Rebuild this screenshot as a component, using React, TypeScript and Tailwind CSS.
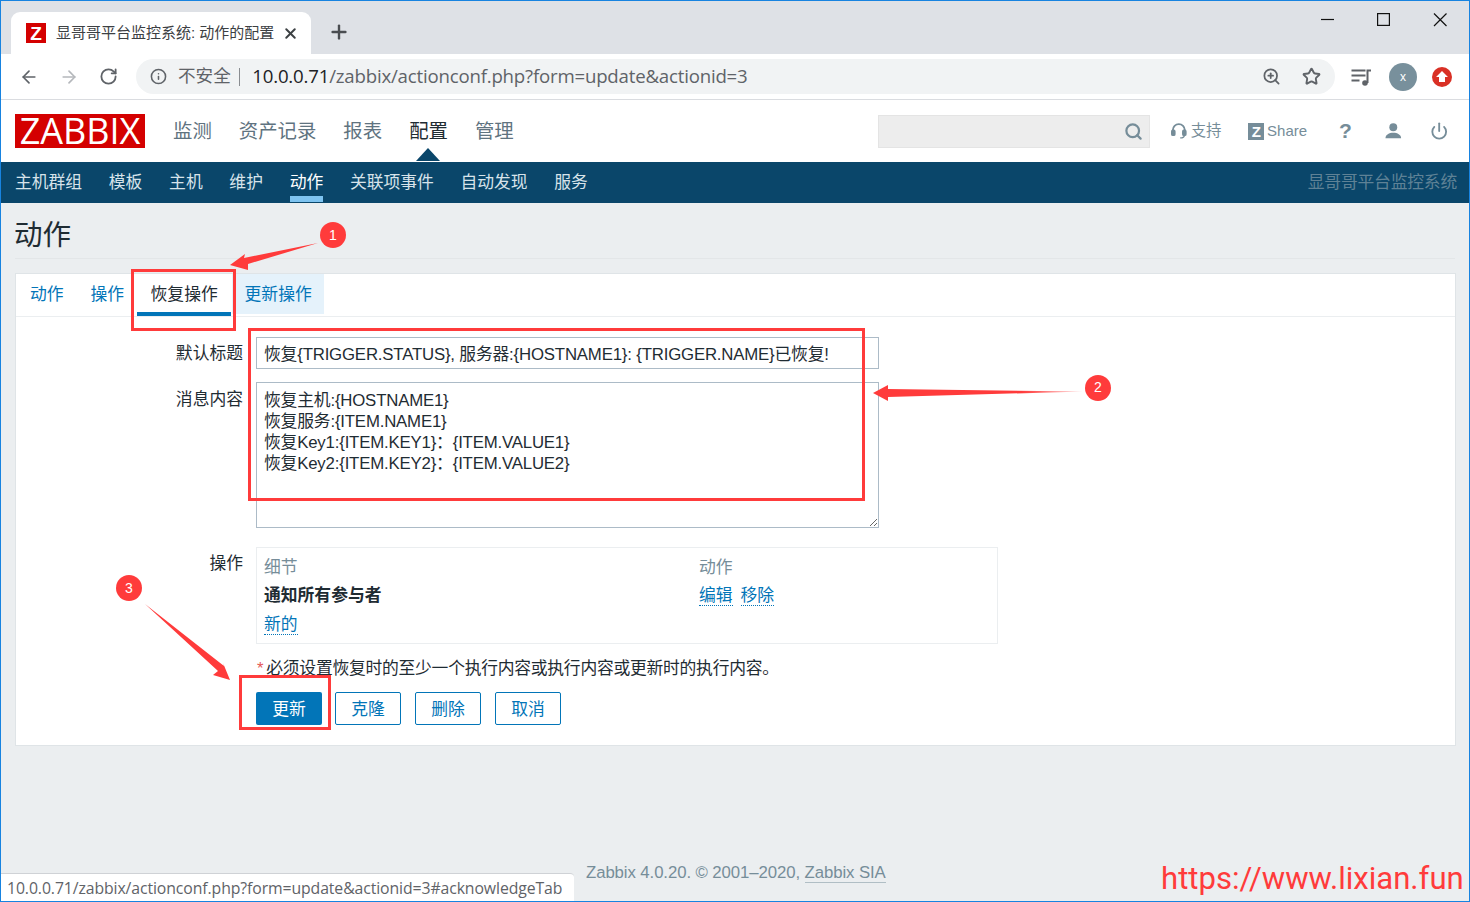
import { ArrowLeft, ArrowRight, RotateCw, Info, ZoomIn, Star, X, Plus, Search, Power } from "lucide-react";

const sans = "font-['Liberation_Sans','Noto_Sans_CJK_SC',sans-serif]";

function Annotations() {
  return (
    <svg className="absolute left-[-1px] top-[-1px] pointer-events-none" width="1470" height="902">
      <defs>
        <linearGradient id="fade2" x1="873" x2="1085" y1="0" y2="0" gradientUnits="userSpaceOnUse">
          <stop offset="0" stopColor="#ff3b3b" />
          <stop offset="0.7" stopColor="#ff3b3b" />
          <stop offset="1" stopColor="#ff3b3b" stopOpacity="0.25" />
        </linearGradient>
      </defs>
      <g fill="none" stroke="#ff3b3b" strokeWidth="3">
        <rect x="132.500" y="270.500" width="102" height="59" />
        <rect x="249.500" y="329.500" width="614" height="170" />
        <rect x="240.500" y="676.500" width="89" height="52" />
      </g>
      <polygon fill="#ff3b3b" points="230,265 245,254 244,258 318,243 248,264 248,270" />
      <polygon fill="url(#fade2)" points="873,393 888,385 888,389 1083,391.500 888,397 888,401" />
      <polygon fill="#ff3b3b" points="230,680 213,675 218,671 145,604 224,666 223,663" />
      <circle cx="333" cy="235" r="13" fill="#ff3b3b" />
      <circle cx="1098" cy="388" r="13" fill="#ff3b3b" />
      <circle cx="129" cy="588" r="13" fill="#ff3b3b" />
    </svg>
  );
}

function Badge({ n, cls }: { n: string; cls: string }) {
  return (
    <span className={`absolute w-[26px] h-[26px] flex items-center justify-center text-white text-[14px] font-['Liberation_Sans',sans-serif] ${cls}`}>
      {n}
    </span>
  );
}

function Browser() {
  return (
    <>
      <div className="h-[53px] bg-[#dee1e6] flex items-end pl-[10px] shrink-0">
        <div className={`w-[300px] h-[42px] bg-white rounded-t-[9px] flex items-center pl-[15px] pr-[15px] ${sans}`}>
          <span className="w-5 h-5 bg-[#d40000] text-white font-bold text-[19px] flex items-center justify-center leading-none mr-[10px] shrink-0">Z</span>
          <span className="text-[15px] text-[#3c4043] whitespace-nowrap flex-1 overflow-hidden">显哥哥平台监控系统: 动作的配置</span>
          <X size={17} strokeWidth={2.800} className="text-[#3c4043] shrink-0 mr-[-3px]" />
        </div>
        <Plus size={22} strokeWidth={2.600} className="text-[#4a4d51] ml-[17px] mb-[11px]" />
        <div className="ml-auto self-start flex items-center h-[36px]">
          <svg width="160" height="36" viewBox="0 0 160 36" className="mr-[18px]">
            <g fill="none" stroke="#111" strokeWidth="1.200">
              <path d="M30 18.500h13" />
              <rect x="86.600" y="12.600" width="11.800" height="11.800" />
              <path d="M143 12.500l12.500 12.500M155.500 12.500l-12.500 12.500" />
            </g>
          </svg>
        </div>
      </div>
      <div className="h-[46px] bg-white border-b border-[#dadce0] flex items-center shrink-0">
        <div className="flex items-center w-[135px] pl-[18px] gap-[20px]">
          <ArrowLeft size={20} strokeWidth={2} className="text-[#5f6368]" />
          <ArrowRight size={20} strokeWidth={2} className="text-[#b5b8bc]" />
          <RotateCw size={19} strokeWidth={2.300} className="text-[#5f6368]" />
        </div>
        <div className="w-[1199px] h-[35px] bg-[#f1f3f4] rounded-full flex items-center pl-[14px] pr-[14px]">
          <Info size={17} strokeWidth={2.200} className="text-[#5f6368] shrink-0" />
          <span className={`ml-[11px] text-[17.600px] text-[#5f6368] ${sans}`}>不安全</span>
          <span className="ml-[8px] w-[1.500px] h-[18px] bg-[#8a8d91]" />
          <span className="ml-[12px] mb-[2px] text-[18.650px] text-[#5f6368] font-['Open_Sans',sans-serif] tracking-[-0.2px] whitespace-nowrap">
            <span className="text-[#202124]">10.0.0.71</span>/zabbix/actionconf.php?form=update&amp;actionid=3
          </span>
          <ZoomIn size={19} strokeWidth={2.200} className="text-[#5f6368] ml-auto" />
          <Star size={19} strokeWidth={2.400} className="text-[#5f6368] ml-[21px]" />
        </div>
        <svg className="ml-[16px]" width="21" height="18" viewBox="0 0 21 18" fill="none" stroke="#5f6368" strokeWidth="2">
          <path d="M0.500 2.500h14M0.500 7.500h14M0.500 12.500h8" />
          <path d="M16.500 15V2.500h3.500" />
          <circle cx="14" cy="15" r="2.800" fill="#5f6368" stroke="none" />
        </svg>
        <span className={`ml-[17px] w-[28px] h-[28px] rounded-full bg-[#78909c] text-white text-[12px] flex items-center justify-center ${sans}`}>x</span>
        <span className="ml-[15px] w-[20px] h-[20px] rounded-full bg-[#d93025] flex items-center justify-center">
          <svg width="12" height="11" viewBox="0 0 12 11" fill="#fff"><path d="M6 0l6 6H9v5H3V6H0z" /></svg>
        </span>
      </div>
    </>
  );
}

function ZabbixHeader() {
  const top = [
    { t: "监测" },
    { t: "资产记录" },
    { t: "报表" },
    { t: "配置", on: true },
    { t: "管理" },
  ];
  const sub = ["主机群组", "模板", "主机", "维护", "动作", "关联项事件", "自动发现", "服务"];
  return (
    <div className={sans}>
      <div className="h-[62px] bg-white flex items-center pl-[14px] pr-[21px] relative">
        <div className="w-[130px] h-[34px] bg-[#d40000] text-white text-[36px] leading-[34px] text-center font-['Open_Sans',sans-serif]">ZABBIX</div>
        <div className="flex gap-[27px] ml-[28px] text-[19.400px] leading-[30px]">
          {top.map((x) => (
            <a key={x.t} className={x.on ? "text-[#1f2c33] relative" : "text-[#5f7380]"}>
              {x.t}
              {x.on && <span className="absolute left-[7px] top-[32px] w-0 h-0 border-x-[12px] border-x-transparent border-b-[13px] border-b-[#0a466a]" />}
            </a>
          ))}
        </div>
        <div className="ml-auto w-[272px] h-[33px] bg-[#ededed] border border-[#e4e4e4] flex items-center justify-end pr-[6px]">
          <Search size={19} strokeWidth={2.800} className="text-[#768d99]" />
        </div>
        <div className="flex items-center text-[#768d99] ml-[21px] w-[277px] whitespace-nowrap">
          <svg width="17" height="18" viewBox="0 0 17 18" fill="none" stroke="#768d99" strokeWidth="2">
            <path d="M2 11V8a6.500 6.500 0 0113 0v3" />
            <rect x="1" y="8.500" width="3" height="5" fill="#768d99" rx="1" />
            <rect x="13" y="8.500" width="3" height="5" fill="#768d99" rx="1" />
            <path d="M14.500 13.500c0 2-2 3-4.500 3" strokeWidth="1.500" />
          </svg>
          <span className="ml-[4px] text-[15.400px]">支持</span>
          <span className="ml-[27px] w-[17px] h-[17px] bg-[#768d99] text-white text-[15px] font-bold flex items-center justify-center leading-none">Z</span>
          <span className="ml-[3px] text-[15px]">Share</span>
          <span className="ml-[32px] text-[21px] font-bold w-[12px] text-center">?</span>
          <svg className="ml-[34px]" width="18" height="18" viewBox="0 0 18 18" fill="#768d99">
            <circle cx="9" cy="5" r="4.300" />
            <path d="M0.500 17c0-4 4-6 8.500-6s8.500 2 8.500 6z" />
          </svg>
          <Power size={20} strokeWidth={2.400} className="ml-[28px]" />
        </div>
      </div>
      <div className="h-[41px] bg-[#0a466a] flex pl-[14px] pr-[12px] text-[16.800px] text-[#d7e3ea] gap-[26.700px]">
        {sub.map((s) => (
          <a key={s} className={s === "动作" ? "h-[40px] leading-[42px] text-white border-b-[6px] border-[#7ec3f0]" : "leading-[42px]"}>{s}</a>
        ))}
        <span className="ml-auto leading-[42px] text-[#5f8296] tracking-[-0.2px]">显哥哥平台监控系统</span>
      </div>
    </div>
  );
}

function Form() {
  const dotted = "text-[#0275b8] border-b border-dotted border-[#0275b8] leading-[20px]";
  const buttons = ["克隆", "删除", "取消"];
  return (
    <div className="mt-[14px] ml-[14px] mr-[13px] bg-white border border-[#dfe4e7] h-[473px]">
      <div className="h-[43px] border-b border-[#ebeef0] flex text-[16.800px] text-[#0275b8]">
        <a className="ml-[14px] pt-[8px]">动作</a>
        <a className="ml-[27px] pt-[8px]">操作</a>
        <a className="ml-[13px] w-[94px] h-[42px] pt-[8px] text-center text-[#1f2c33] border-b-4 border-[#0275b8]">恢复操作</a>
        <a className="w-[92px] h-[40px] pt-[8px] text-center bg-[#e5f2fb] ml-[1px]">更新操作</a>
      </div>
      <div className="pt-[20px] text-[16.800px] text-[#1f2c33]">
        <div className="flex">
          <label className="w-[227px] h-[32px] text-right leading-[34px]">默认标题</label>
          <input
            readOnly
            value="恢复{TRIGGER.STATUS}, 服务器:{HOSTNAME1}: {TRIGGER.NAME}已恢复!"
            className="ml-[13px] w-[623px] h-[32px] px-[7px] border border-[#acbbc7] outline-none text-[#1f2c33] tracking-[-0.18px]"
          />
        </div>
        <div className="flex mt-[13px]">
          <label className="w-[227px] text-right leading-[34px] pt-[1px]">消息内容</label>
          <textarea
            readOnly
            defaultValue={"恢复主机:{HOSTNAME1}\n恢复服务:{ITEM.NAME1}\n恢复Key1:{ITEM.KEY1}：{ITEM.VALUE1}\n恢复Key2:{ITEM.KEY2}：{ITEM.VALUE2}"}
            className="ml-[13px] w-[623px] h-[146px] px-[7px] pt-[7px] border border-[#acbbc7] outline-none leading-[21px] text-[#1f2c33] tracking-[-0.18px]"
          />
        </div>
        <div className="flex mt-[19px]">
          <label className="w-[227px] text-right leading-[34px]">操作</label>
          <div className="ml-[13px] w-[742px] h-[97px] border border-[#ebeef0] px-[7px] grid grid-cols-[435px_1fr] content-start">
            <span className="text-[#768d99] h-[31px] leading-[38px] pt-[1px]">细节</span>
            <span className="text-[#768d99] h-[31px] leading-[38px] pt-[1px]">动作</span>
            <span className="font-bold h-[29px] leading-[34px]">通知所有参与者</span>
            <span className="h-[29px] leading-[34px]">
              <a className={dotted}>编辑</a>
              <a className={`${dotted} ml-[8px]`}>移除</a>
            </span>
            <span className="h-[29px] leading-[34px] col-span-2">
              <a className={dotted}>新的</a>
            </span>
          </div>
        </div>
        <div className="ml-[241px] mt-[14px] h-[20px] leading-[22px] whitespace-nowrap tracking-[-0.25px]">
          <span className="text-[#e45959] mr-[3px]">*</span>必须设置恢复时的至少一个执行内容或执行内容或更新时的执行内容。
        </div>
        <div className="ml-[240px] mt-[14px] flex">
          <button className="w-[66px] h-[33px] bg-[#0275b8] rounded-[2px] text-white pt-[3px]">更新</button>
          {buttons.map((b, i) => (
            <button key={b} className={`w-[66px] h-[33px] border border-[#0275b8] rounded-[2px] text-[#0275b8] pt-[3px] ${i === 0 ? "ml-[13px]" : "ml-[14px]"}`}>{b}</button>
          ))}
        </div>
      </div>
    </div>
  );
}

export default function App() {
  return (
    <div className="w-[1470px] h-[902px] relative overflow-hidden border-t border-x border-b border-[#1783e0] bg-[#ebeef0] flex flex-col">
      <Browser />
      <ZabbixHeader />
      <main className={`flex-1 flex flex-col ${sans}`}>
        <div className="mx-[14px] h-[56px] border-b border-[#e3e6e8] text-[28.500px] text-[#1f2c33] leading-[64px]"><span className="-ml-[1px]">动作</span></div>
        <Form />
        <div className="mt-auto mb-[16px] pl-[585px] text-[16.800px] text-[#768d99] tracking-[-0.1px]">
          Zabbix 4.0.20. © 2001–2020, <a className="border-b border-[#768d99]/50">Zabbix SIA</a>
        </div>
      </main>
      <div className="absolute left-[-1px] bottom-0 w-[574px] h-[28px] bg-white border-t border-[#cfd2d6] rounded-tr-[4px] pl-[7px] leading-[28px] text-[15.800px] text-[#5f6368] whitespace-nowrap font-['Open_Sans',sans-serif] tracking-[-0.1px]">
        10.0.0.71/zabbix/actionconf.php?form=update&amp;actionid=3#acknowledgeTab
      </div>
      <div className="absolute left-[1160px] top-[858px] text-[31.100px] leading-[40px] text-[#ff3b3b] font-['Roboto',sans-serif] whitespace-nowrap">https://www.lixian.fun</div>
      <Annotations />
      <Badge n="1" cls="left-[319px] top-[221px]" />
      <Badge n="2" cls="left-[1084px] top-[373px]" />
      <Badge n="3" cls="left-[115px] top-[574px]" />
    </div>
  );
}
